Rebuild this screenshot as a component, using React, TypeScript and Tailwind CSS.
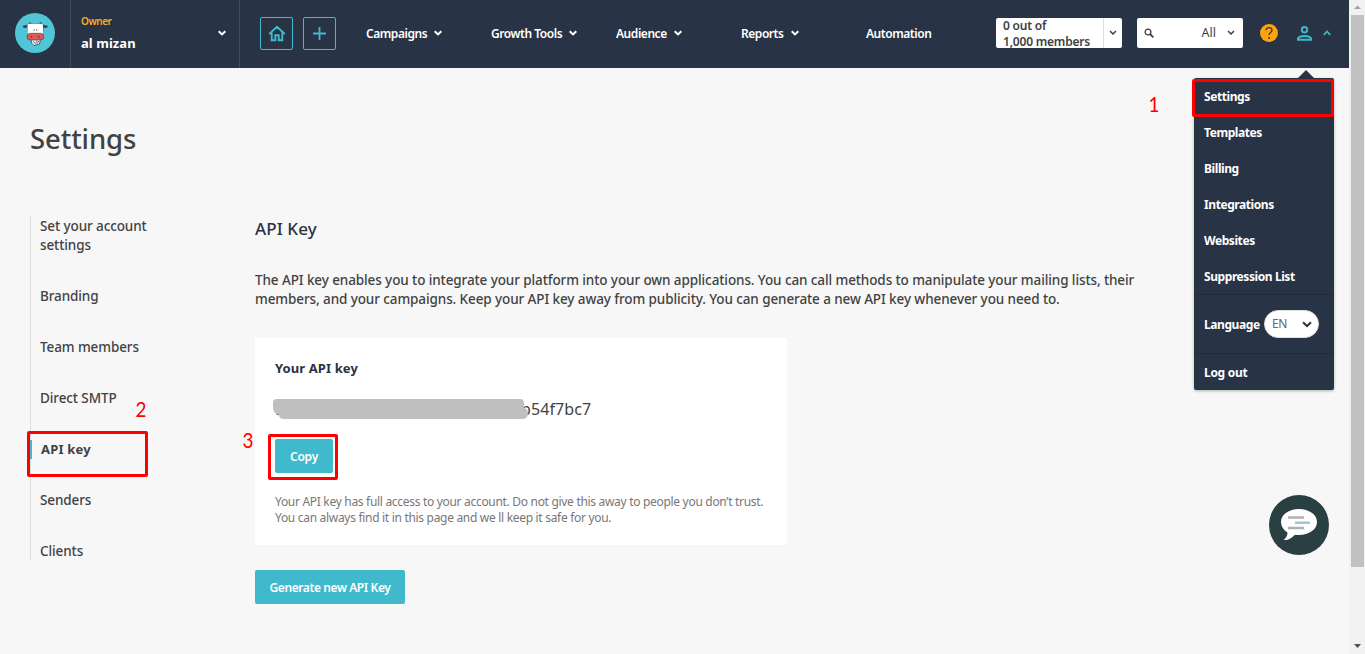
import React from 'react';

function Chevron({ className = '' }: { className?: string }) {
  return (
    <svg viewBox="0 0 8 6" className={`h-[6px] w-[8px] shrink-0 ${className}`} fill="none" stroke="currentColor" strokeWidth="2">
      <path d="M0.7 1.2 4 4.4 7.3 1.2" />
    </svg>
  );
}

function CowLogo() {
  return (
    <svg viewBox="0 0 40 40" className="h-10 w-10">
      <circle cx="20" cy="20" r="20" fill="#50c5d5" />
      <path d="M7.500 13.500C9 11.800 11 12.500 13 11.500L15 9 16.500 10.500H24L26 9 27.500 11.500C29.500 12.500 31.500 11.800 33 13.500 31.500 15.300 29.500 15.300 28.500 14.500L28 22H12.500L12 14.500C11 15.300 9 15.300 7.500 13.500Z" fill="#3b4252" />
      <path d="M16 26H25.500L24.500 31 19 32.500 16.500 30Z" fill="#e9edf0" stroke="#3b4252" strokeWidth="0.800" />
      <path d="M18 28.500 20 30M22 27.500 20.500 31M23.500 28 22.500 30.500" stroke="#59606d" strokeWidth="0.800" />
      <path d="M12.500 12.500Q12.500 10.800 14.500 10.800H26Q28 10.800 28 12.500V22H12.500Z" fill="#fff" />
      <rect x="12" y="20.300" width="16.800" height="6.700" rx="3.300" fill="#e2574f" stroke="#3b4252" strokeWidth="0.600" />
      <circle cx="16.500" cy="23.800" r="0.800" fill="#3b4252" />
      <circle cx="24" cy="23.800" r="0.800" fill="#3b4252" />
      <path d="M19.200 16.300V17.800M21.800 16.300V17.800" stroke="#3b4252" strokeWidth="0.800" />
    </svg>
  );
}

const nav = [
  { label: 'Campaigns', arrow: true },
  { label: 'Growth Tools', arrow: true },
  { label: 'Audience', arrow: true },
  { label: 'Reports', arrow: true },
  { label: 'Automation', arrow: false },
];

const menu = ['Settings', 'Templates', 'Billing', 'Integrations', 'Websites', 'Suppression List'];

const side = ['Branding', 'Team members', 'Direct SMTP', 'API key', 'Senders', 'Clients'];

function Header() {
  return (
    <header className="flex h-[68px] bg-[#283345] text-white">
      <div className="flex w-[71px] items-center border-r border-[#444b55] pb-[2px] pl-[15px]">
        <CowLogo />
      </div>
      <div className="flex w-[169px] items-center justify-between border-r border-[#444b55] pr-[13px] pl-[10px]">
        <div className="pb-[3px]">
          <div className="text-[10px] leading-[20px] font-semibold tracking-[-0.45px] text-[#fbac2b]">Owner</div>
          <div className="pt-[1px] text-[13px] leading-[22px] font-bold tracking-[0.05px]">al mizan</div>
        </div>
        <Chevron className="mb-[2px]" />
      </div>
      <div className="flex gap-[10px] pt-[17px] pl-5 text-[#3fbacc]">
        <div className="flex h-[33px] w-[33px] items-center justify-center rounded-[2px] border border-current">
          <svg viewBox="0 0 18 17" className="h-[17px] w-[18px]" fill="none" stroke="currentColor" strokeWidth="1.900">
            <path d="M1.200 9 9 1.700 16.800 9M3.700 7.500V15.200H7.300V10.200H10.700V15.200H14.300V7.500" />
          </svg>
        </div>
        <div className="flex h-[33px] w-[33px] items-center justify-center rounded-[2px] border border-current">
          <svg viewBox="0 0 13 13" className="h-[13px] w-[13px]" fill="none" stroke="currentColor" strokeWidth="1.800">
            <path d="M6.500 0V13M0 6.500H13" />
          </svg>
        </div>
      </div>
      <nav className="ml-[30px] flex w-[630px] text-[12px] font-semibold">
        {nav.map((n) => (
          <div key={n.label} className="flex w-[125px] items-center gap-[7px] whitespace-nowrap">
            <span className="tracking-[-0.45px]">{n.label}</span>
            {n.arrow && <Chevron className="mb-[2px]" />}
          </div>
        ))}
      </nav>
      <div className="mt-[18px] flex h-[30px] w-[126px] rounded-[2px] bg-white text-[#3f3f3f]">
        <div className="w-[108px] border-r border-[#ddd] pl-[7px] text-[12px] leading-[16px] font-semibold tracking-[-0.2px]">
          0 out of
          <br />
          1,000 members
        </div>
        <div className="flex flex-1 items-center justify-center">
          <svg viewBox="0 0 8 6" className="h-[6px] w-[8px]" fill="none" stroke="currentColor" strokeWidth="1.500">
            <path d="M1 1 4 4 7 1" />
          </svg>
        </div>
      </div>
      <div className="mt-[18px] ml-[15px] flex h-[30px] w-[106px] items-center rounded-[2px] bg-white pr-2 pl-[7px] text-[#3f3f3f]">
        <svg viewBox="0 0 10 10" className="h-[10px] w-[10px]" fill="none" stroke="currentColor" strokeWidth="1.300">
          <circle cx="4" cy="4" r="2.900" />
          <path d="M6 6 9.300 9.300" strokeWidth="1.800" />
        </svg>
        <span className="ml-auto pt-[1px] text-[12.500px]">All</span>
        <svg viewBox="0 0 8 6" className="ml-[11px] h-[6px] w-[8px]" fill="none" stroke="currentColor" strokeWidth="1.500">
          <path d="M1 1 4 4 7 1" />
        </svg>
      </div>
      <svg viewBox="0 0 18 18" className="mt-[24px] ml-[17px] h-[18px] w-[18px]">
        <circle cx="9" cy="9" r="9" fill="#ffa40b" />
        <path d="M6 6.300C6 2.700 12.100 2.700 12 6.300C11.900 8.600 9.100 8.500 9.100 11" fill="none" stroke="#3a3533" strokeWidth="1.400" />
        <circle cx="9.100" cy="14" r="1" fill="#3a3533" />
      </svg>
      <svg viewBox="0 0 15 15" className="mt-[26px] ml-[19px] h-[15px] w-[15px]" fill="none" stroke="#3fbacc" strokeWidth="2">
        <circle cx="7.500" cy="3.700" r="2.700" />
        <path d="M1 13.800V12.500C2.500 9.300 12.500 9.300 14 12.500V13.800Z" />
      </svg>
      <svg viewBox="0 0 8 6" className="mt-[30px] ml-[11px] h-[6px] w-[8px]" fill="none" stroke="#3fbacc" strokeWidth="1.700">
        <path d="M0.800 4.800 4 1.500 7.200 4.800" />
      </svg>
    </header>
  );
}

function AccountMenu() {
  return (
    <div className="absolute top-[70px] left-[1194px] w-[140px] text-[12px] font-bold text-white">
      <svg viewBox="0 0 16 8" className="ml-[104px] block h-2 w-4">
        <path d="M0 8 8 0 16 8Z" fill="#283345" />
      </svg>
      <div className="rounded-[2px] bg-[#283345] pt-[1px] shadow-[0_1px_3px_rgba(0,0,0,0.3)]">
        <div className="h-[215px]">
          {menu.map((m) => (
            <div key={m} className="h-9 pl-[10px] leading-[36px] tracking-[-0.42px]">
              {m}
            </div>
          ))}
        </div>
        <div className="flex h-[60px] items-center border-y border-[#212b3a] pl-[10px] tracking-[-0.42px]">
          <span className="w-[60px] pt-[1px]">Language</span>
          <div className="flex h-7 w-[55px] items-center justify-between rounded-full border border-[#ddd] bg-white pr-[6px] pl-[7px] text-[12px] font-normal text-[#666]">
            EN
            <svg viewBox="0 0 10 7" className="h-[7px] w-[10px]" fill="none" stroke="#333" strokeWidth="2">
              <path d="M1 1.200 5 5 9 1.200" />
            </svg>
          </div>
        </div>
        <div className="h-[36px] pl-[10px] leading-[37px] tracking-[-0.3px]">Log out</div>
      </div>
      <div className="absolute top-[9px] left-[-2px] h-[38px] w-[142px] rounded-[2px] border-3 border-[#fe0000]" />
    </div>
  );
}

export default function App() {
  return (
    <div className="relative flex h-[654px] w-[1365px] overflow-hidden bg-[#f7f7f7] font-['Noto_Sans',sans-serif] text-[#424242]">
      <div className="w-[1349px]">
        <Header />
        <main className="pl-[30px]">
          <h1 className="pt-[50px] text-[27.500px] leading-[42px] font-medium tracking-[-0.1px]">Settings</h1>
          <div className="flex pt-[56px]">
            <aside className="h-[344px] w-[225px] border-l border-[#dedede] text-[13.500px] leading-[19px] font-medium tracking-[-0.1px]">
              <div className="mb-8 w-[130px] pt-[1px] pl-[9px]">Set your account settings</div>
              {side.map((s) =>
                s === 'API key' ? (
                  <div key={s} className="-ml-px mb-8 border-l-2 border-[#3fbacc] pl-[9px] text-[13px] font-bold tracking-[0.2px]">
                    {s}
                  </div>
                ) : (
                  <div key={s} className="mb-8 pl-[9px]">
                    {s}
                  </div>
                ),
              )}
            </aside>
            <section>
              <h2 className="text-[17px] leading-[25px] font-medium tracking-[0.1px] text-[#283345]">API Key</h2>
              <p className="mt-[30px] text-[13.500px] leading-[19px] font-medium tracking-[-0.1px] whitespace-nowrap">
                The API key enables you to integrate your platform into your own applications. You can call methods to manipulate your mailing lists, their
                <br />
                members, and your campaigns. Keep your API key away from publicity. You can generate a new API key whenever you need to.
              </p>
              <div className="mt-[29px] h-[207px] w-[532px] bg-white pt-5 pl-5">
                <div className="text-[13px] leading-[20px] font-bold tracking-[0.1px] text-[#283345]">Your API key</div>
                <div className="relative mt-[19px] h-6 pl-[246px] text-[16px] leading-[24px] tracking-[0.1px]">
                  b54f7bc7
                  <svg viewBox="0 0 256 20" className="absolute top-[2px] left-[-2px] h-5 w-[256px]">
                    <path d="M3 15.500 5.500 13 7 16.500Z" fill="#424242" />
                    <path d="M4 0H247Q251 0 251 4V9Q255 10 255 14 255 20 249 20H11Q6 20 6 16 0 14 0 9V4Q0 0 4 0Z" fill="#bfbfbf" />
                  </svg>
                </div>
                <button className="mt-[18px] block h-[34px] w-[58px] rounded-[2px] bg-[#3fb9cb] pt-[2px] text-[12px] font-semibold tracking-[-0.2px] text-white">Copy</button>
                <p className="mt-[21px] text-[12px] leading-[16px] tracking-[-0.305px] whitespace-nowrap text-[#777]">
                  Your API key has full access to your account. Do not give this away to people you don’t trust.
                  <br />
                  You can always find it in this page and we ll keep it safe for you.
                </p>
              </div>
              <button className="mt-[25px] block h-[34px] w-[150px] rounded-[2px] bg-[#3fb9cb] pt-[2px] text-[12px] font-semibold tracking-[-0.4px] whitespace-nowrap text-white">
                Generate new API Key
              </button>
            </section>
          </div>
        </main>
      </div>
      <div className="flex w-4 flex-col bg-[#f1f1f1]">
        <svg viewBox="0 0 16 15" className="h-[15px] w-4">
          <path d="M5 9 8.500 5.500 12 9Z" fill="#a3a3a3" />
        </svg>
        <div className="ml-[2px] h-[552px] w-[13px] bg-[#c1c1c1]" />
        <svg viewBox="0 0 16 15" className="mt-auto h-[15px] w-4">
          <path d="M5 5 12 5 8.500 9Z" fill="#505050" />
        </svg>
      </div>

      <AccountMenu />

      <svg viewBox="0 0 60 60" className="absolute top-[495px] left-[1269px] h-[60px] w-[60px]">
        <circle cx="30" cy="30" r="30" fill="#2a3f42" />
        <path d="M30 14C40 14 48 19.500 48 27S40 40 30 40C28.500 40 27 40 26 39.700 23 43 19 45.500 14.500 45 17 43 18.500 40.500 18.500 37.500 14.500 35 12 31 12 27 12 19.500 20 14 30 14Z" fill="#fff" />
        <path d="M19 22.500H35M19 33H35" stroke="#b0b0b0" strokeWidth="2.400" />
        <path d="M26 27.700H41" stroke="#9cc5cd" strokeWidth="2.400" />
      </svg>

      <div className="absolute top-[431px] left-[27px] h-[46px] w-[121px] rounded-[2px] border-3 border-[#fe0000]" />
      <div className="absolute top-[434px] left-[268px] h-[46px] w-[70px] rounded-[2px] border-3 border-[#fe0000]" />
      <span className="absolute top-[90px] left-[1148px] scale-x-90 font-['Lato',sans-serif] text-[21px] leading-[28px] text-[#fe0000]">1</span>
      <span className="absolute top-[395px] left-[135px] scale-x-90 font-['Lato',sans-serif] text-[21px] leading-[28px] text-[#fe0000]">2</span>
      <span className="absolute top-[426px] left-[242px] scale-x-90 font-['Lato',sans-serif] text-[21px] leading-[28px] text-[#fe0000]">3</span>
    </div>
  );
}
